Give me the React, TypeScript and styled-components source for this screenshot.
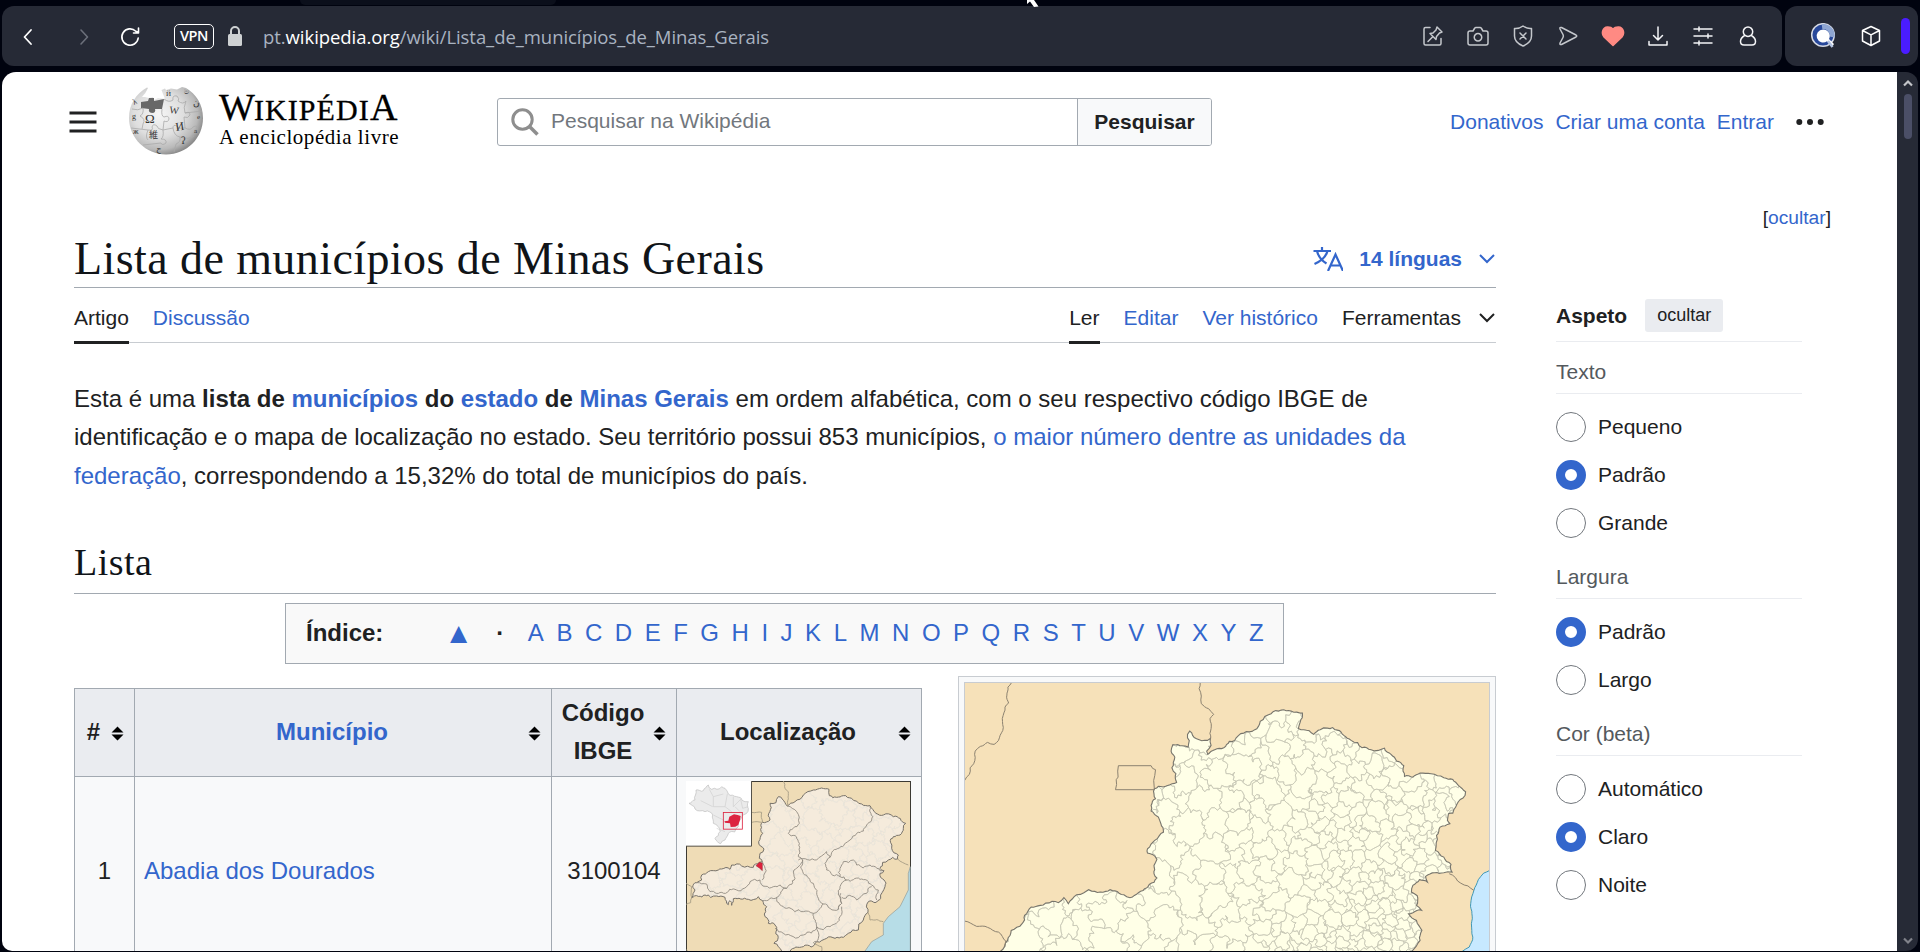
import React from "react";
import styled, { createGlobalStyle, css } from "styled-components";

const sans = '"Liberation Sans", Arial, sans-serif';
const serif = '"Liberation Serif", Georgia, serif';
const ui = '"Open Sans", "Noto Sans", sans-serif';
const blue = "#3366cc";

const Global = createGlobalStyle`
  * { box-sizing: border-box; }
  html, body { margin: 0; padding: 0; background: #00030f; overflow: hidden; }
  svg { display: block; flex: none; }
  a { color: ${blue}; text-decoration: none; }
`;

/* ---------- geometry helpers for the maps ---------- */

type Pt = [number, number];

const parse = (s: string, sx = 1, sy = 1): Pt[] =>
  s.trim().split(/\s+/).map((p) => {
    const [x, y] = p.split(",").map(Number);
    return [x * sx, y * sy] as Pt;
  });

const noise = (a: number, b: number) => {
  const v = Math.sin(a * 12.9898 + b * 78.233) * 43758.5453;
  return v - Math.floor(v) - 0.5;
};

/* Midpoint displacement that gives the same wobble whichever way an edge is walked. */
const bend = (a: Pt, b: Pt, amount: number, min: number): Pt[] => {
  const dx = b[0] - a[0];
  const dy = b[1] - a[1];
  const len = Math.hypot(dx, dy);
  if (len < min) return [b];
  const mx = (a[0] + b[0]) / 2;
  const my = (a[1] + b[1]) / 2;
  const flip = dx > 0 || (dx === 0 && dy > 0) ? 1 : -1;
  const k = noise(Math.round(mx * 50), Math.round(my * 50)) * amount * flip;
  const m: Pt = [mx - dy * k, my + dx * k];
  return [...bend(a, m, amount, min), ...bend(m, b, amount, min)];
};

const wobble = (pts: Pt[], amount: number, min: number): Pt[] => {
  const out: Pt[] = [pts[0]];
  for (let i = 1; i < pts.length; i++) out.push(...bend(pts[i - 1], pts[i], amount, min));
  return out;
};

const path = (pts: Pt[], closed = false) =>
  "M" + pts.map((p) => p[0].toFixed(1) + " " + p[1].toFixed(1)).join("L") + (closed ? "Z" : "");

const cells = (w: number, h: number, spacing: (x: number, y: number) => number, tries: number) => {
  let seed = 7;
  const rnd = () => {
    seed = (seed * 16807) % 2147483647;
    return seed / 2147483647;
  };
  const sites: Pt[] = [];
  for (let i = 0; i < tries; i++) {
    const p: Pt = [rnd() * w, rnd() * h];
    const r = spacing(p[0], p[1]) * (0.65 + rnd() * 0.85);
    if (sites.every((q) => Math.hypot(p[0] - q[0], p[1] - q[1]) > r)) sites.push(p);
  }
  let d = "";
  sites.forEach((s, i) => {
    let poly: Pt[] = [[-20, -20], [w + 20, -20], [w + 20, h + 20], [-20, h + 20]];
    sites.forEach((q, j) => {
      if (i === j || Math.hypot(q[0] - s[0], q[1] - s[1]) > 110) return;
      const nx = q[0] - s[0];
      const ny = q[1] - s[1];
      const c = (q[0] * q[0] + q[1] * q[1] - s[0] * s[0] - s[1] * s[1]) / 2;
      const next: Pt[] = [];
      for (let k = 0; k < poly.length; k++) {
        const a = poly[k];
        const b = poly[(k + 1) % poly.length];
        const da = a[0] * nx + a[1] * ny - c;
        const db = b[0] * nx + b[1] * ny - c;
        if (da <= 0) next.push(a);
        if (da * db < 0) {
          const t = da / (da - db);
          next.push([a[0] + (b[0] - a[0]) * t, a[1] + (b[1] - a[1]) * t]);
        }
      }
      poly = next;
    });
    if (poly.length > 2) d += path(wobble([...poly, poly[0]], 0.95, 4), true);
  });
  return d;
};

/* ---------- state map ---------- */

const MX = 1 / 2.751;
const MY = 1 / 3;
const big = (s: string) => parse(s, MX, MY).map(([x, y]) => [x - 24.7, y - 22.6] as Pt);

const stateOutline = path(
  wobble(
    big(`150,900 165,873 185,840 195,810 225,790 232,765 250,740 275,735 290,728 325,727 340,712 352,730 375,703 395,697
    408,688 425,693 455,693 480,691 505,703 522,712 545,697 558,690 575,672 596,653 588,640 588,615 596,597 585,583 570,578
    570,565 590,540 614,515 607,490 600,470 580,452 580,435 592,415 589,385 600,378 650,366 648,340 637,322 645,290 636,265
    640,253 665,256 682,260 680,222 686,212 705,235 735,240 743,234 745,255 733,272 736,282 755,268 780,262 795,243 810,240
    835,218 850,214 875,198 880,183 910,160 938,149 965,152 996,158 990,185 985,204 1000,208 1027,222 1045,208 1065,203
    1092,209 1110,225 1130,240 1160,262 1185,268 1205,270 1222,263 1240,282 1275,316 1277,348 1300,350 1320,338 1350,340
    1385,352 1410,357 1425,375 1445,394 1438,413 1418,440 1410,458 1398,460 1395,480 1402,490 1375,500 1365,525 1362,570
    1385,590 1405,612 1408,635 1385,637 1360,637 1335,648 1340,665 1318,658 1300,675 1296,695 1312,706 1310,735 1324,750
    1300,757 1288,760 1310,780 1325,810 1320,840 1297,873 1290,900`),
    0.3,
    4
  )
);

const districtBorder = path(big("490,316 580,316 584,324 592,328 590,345 587,360 589,388 482,388 485,372 484,358 489,350 488,332 490,316"));

const neighbours = [
  "196,67 186,80 188,128 178,140 172,210 160,240 148,252 130,246 110,258 96,272 92,310 82,322 80,342 67,360",
  "715,67 712,85 718,130 738,145 752,162 742,175 744,234",
  "67,782 100,798 130,801 160,815 180,842 176,858",
  "1400,640 1468,690",
].map((s) => path(wobble(big(s), 0.2, 4)));

const coast = path(wobble(big("1530,628 1510,631 1495,638 1480,658 1468,690 1459,730 1461,790 1465,830 1455,860 1435,874 1420,900"), 0.15, 5));

const municipalities = cells(
  526,
  275,
  (x, y) => {
    if (x > 385 && y > 190) return 7.6;
    if (x > 300 && y > 235) return 6.8;
    if (x > 370 && y > 140) return 10.5;
    if (x > 330) return 13.5;
    if (x > 270) return 17;
    return 27;
  },
  5200
);

const StateMap = () => (
  <svg width="526" height="290" viewBox="0 0 526 290">
    <defs>
      <clipPath id="state"><path d={stateOutline} /></clipPath>
    </defs>
    <rect width="526" height="290" fill="#f6e1b9" />
    <path d={coast + "L540 290L540 180Z"} fill="#c7e9ff" />
    <path d={coast} fill="none" stroke="#2f8fb0" strokeWidth="0.9" />
    <path d={stateOutline} fill="#ffffe7" />
    <path d={municipalities} clipPath="url(#state)" fill="none" stroke="#c6c6b4" strokeWidth="0.7" />
    <path d={stateOutline} fill="none" stroke="#77756c" strokeWidth="1.1" />
    <path d={districtBorder} fill="none" stroke="#8c8270" strokeWidth="1" />
    {neighbours.map((d) => <path key={d} d={d} fill="none" stroke="#8c8270" strokeWidth="1" />)}
  </svg>
);

/* ---------- small location map ---------- */

const small = (s: string, a = 0.45, m = 10) => wobble(parse(s), a, m);

const regionOutline = path(
  small(`65,713 75,690 68,682 80,668 95,660 95,645 115,635 145,630 155,627 180,628 185,615 215,618 250,622 268,607 277,605
  268,595 270,580 282,567 266,545 278,520 272,508 278,487 300,480 300,430 318,428 325,410 345,428 352,438 375,425 400,405
  430,390 455,384 477,388 478,407 500,412 520,407 545,415 575,432 600,437 618,460 640,465 670,470 707,490 700,505 690,525
  670,530 665,565 685,585 683,597 655,600 638,607 630,625 642,632 630,640 642,660 645,680 632,715 615,728 595,725 594,757
  580,780 565,810 535,820 520,832 470,835 440,845 400,860 360,875 340,890 335,873 312,850 320,810 315,795 295,790 285,770
  290,740 278,722 265,710 235,718 190,716 185,736 180,722 175,734 165,712 140,708 105,705 65,713`),
  true
);

const regionLines = [
  "352,438 380,455 388,490 370,505 355,520 385,545 385,590 398,600 372,630 375,655 350,685",
  "385,600 440,600 470,575 480,592 465,610 470,630 510,650 510,625 520,605 550,600 560,615 600,615 642,632",
  "480,592 540,540 560,520 590,495 605,480 600,440",
  "398,600 400,640 430,670 445,715 460,732 505,748 515,730 505,705 510,680 530,660 510,650",
  "530,660 570,658 605,675 625,690 620,720",
  "515,712 560,720 590,700 605,680",
  "505,748 515,730 512,700",
  "460,732 430,760 400,755 350,745 320,712 350,685 310,680 270,660 240,665 200,690 120,695 110,672 80,668",
  "277,605 277,660",
  "278,722 320,712",
  "430,760 440,800 400,825 340,820 315,805",
  "440,800 480,800 510,770 515,740",
  "440,800 445,835 430,848",
].map((s) => path(small(s)));

const borderLines = [
  "340,363 345,385 355,395 352,438",
  "245,457 275,457 278,487 245,487",
  "683,597 715,615",
  "594,757 600,780 640,785",
  "48,670 65,680 65,713 62,728 48,733",
  "430,848 455,860 455,875",
  "48,868 60,880",
].map((s) => path(small(s, 0.2)));

const brazil = path(
  small("57,430 75,420 78,390 100,392 115,375 125,388 155,380 165,385 175,402 200,410 235,425 235,445 215,470 205,500 175,520 165,540 152,551 135,535 150,515 130,490 128,465 105,455 75,447 57,430", 0.4),
  true
);

const LocationMap = () => (
  <svg width="225" height="178" viewBox="48 363 675 534">
    <defs>
      <clipPath id="region"><path d={regionOutline} /></clipPath>
    </defs>
    <rect x="49.5" y="364.5" width="672" height="540" fill="#efdcb6" stroke="#3c3a34" strokeWidth="3" />
    <path d="M721 620L715 640L715 690L690 740L655 770L640 790L640 825L605 845L585 873L580 900H721Z" fill="#b7dde7" stroke="#8e9a98" strokeWidth="2" />
    <path d={regionOutline} fill="#f5ebdc" />
    <g clipPath="url(#region)">
      <path d={municipalities} transform="translate(48 363) scale(1.9)" fill="none" stroke="#e9e6dc" strokeWidth="0.8" />
    </g>
    <path d={regionOutline} fill="none" stroke="#77726a" strokeWidth="3" />
    {regionLines.map((d) => <path key={d} d={d} fill="none" stroke="#8f897f" strokeWidth="2.6" />)}
    {borderLines.map((d) => <path key={d} d={d} fill="none" stroke="#a39a83" strokeWidth="2.6" />)}
    <path d="M258 617L268 607L277 609V632L268 624Z" fill="#e0203c" stroke="#8a2a34" strokeWidth="1.5" />
    <path d="M48 363H244V558H48Z" fill="#fff" />
    <path d="M244.500 364V558.500H48" fill="none" stroke="#55524a" strokeWidth="3" />
    <path d={brazil} fill="#ebebeb" stroke="#bdbdbd" strokeWidth="2" />
    <path d="M118 388L130 410L160 402M130 410V440L165 440L172 402M190 410V440L212 418M212 418L218 445L235 440M165 440L185 455M130 465L160 480M195 440L210 455M140 505L165 515M92 422L128 440" fill="none" stroke="#cfcfcf" strokeWidth="2" />
    <rect x="160" y="457.500" width="57" height="50" fill="none" stroke="#dc2340" strokeWidth="2.500" />
    <path d="M163 484L175 482L178 470L192 463L203 465L212 468L210 480L205 495L196 500L182 501L180 490L165 488Z" fill="#dc2340" />
  </svg>
);

/* ---------- browser chrome ---------- */

const Window = styled.div`
  width: 1920px;
  height: 952px;
  padding: 6px 2px 1px;
  background: #00030f;
  position: relative;
  overflow: hidden;
  display: flex;
  flex-direction: column;
  gap: 6px;
  font-family: ${sans};
`;
const TabShadow = styled.div`
  position: absolute;
  left: 300px;
  top: -5px;
  width: 256px;
  height: 10px;
  border-radius: 8px;
  background: #0b0f1b;
`;
const Cursor = styled.svg`
  position: absolute;
  left: 1026px;
  top: 0;
`;
const Bars = styled.div`
  display: flex;
  gap: 3px;
  height: 60px;
`;
const Bar = styled.div<{ $w: number }>`
  width: ${(p) => p.$w}px;
  display: flex;
  align-items: center;
  background: #262a36;
  border-radius: 12px;
`;
const Nav = styled.div`
  display: flex;
  align-items: center;
  gap: 32px;
  padding: 2px 0 0 14px;
`;
const Reload = styled.div`
  padding: 2px 0 0 22px;
`;
const Vpn = styled.div`
  width: 40px;
  height: 25px;
  margin: 1px 0 0 32px;
  border: 1.500px solid #fff;
  border-radius: 5px;
  color: #fff;
  font: 600 14.500px/22px ${ui};
  letter-spacing: -0.400px;
  text-align: center;
`;
const Lock = styled.svg`
  margin-left: 13px;
`;
const Url = styled.div`
  flex: 1;
  margin-left: 20px;
  padding-top: 1px;
  font: 18.500px/28px ${ui};
  letter-spacing: -0.060px;
  color: #a9b3c1;
  white-space: nowrap;
  b { font-weight: 400; color: #fff; }
`;
const Actions = styled.div`
  display: flex;
  gap: 21px;
  padding-right: 22px;
`;
const Extensions = styled.div`
  display: flex;
  align-items: center;
  width: 100%;
  padding: 0 8px 0 25px;
  gap: 23px;
`;
const Purple = styled.div`
  width: 9px;
  height: 36px;
  margin-left: -5px;
  border-radius: 5px;
  background: #4a1cff;
`;

const Glyph = ({ d, s = 24, c = "#e6e8ec", w = 1.5, f = "none" }: { d: string; s?: number; c?: string; w?: number; f?: string }) => (
  <svg width={s} height={s} viewBox="0 0 24 24" fill={f} stroke={c} strokeWidth={w} strokeLinecap="round" strokeLinejoin="round">
    <path d={d} />
  </svg>
);

const actionIcons = [
  { d: "M9 3.500H4.500Q3 3.500 3 5V19.500Q3 21 4.500 21H18.500Q20 21 20 19.500V14.500M16 3L21 8L18.500 9L15.500 12.500L15 15.500L9 9.500L12 9L15 6ZM12 12.500L7 17.500", c: "#c4c7cc" },
  { d: "M4 7H7L8.500 4.500Q9 3.500 10 3.500H14Q15 3.500 15.500 4.500L17 7H20Q22 7 22 9V19Q22 21 20 21H4Q2 21 2 19V9Q2 7 4 7ZM12 9.500A3.700 3.700 0 1 0 12 17A3.700 3.700 0 1 0 12 9.500Z", c: "#c4c7cc" },
  { d: "M12 2Q16 5 20.500 4.500V12Q20.500 18.500 12 22Q3.500 18.500 3.500 12V4.500Q8 5 12 2ZM9 9L15 15M15 9L9 15", c: "#c4c7cc" },
  { d: "M5.500 3.500L20 11Q21.500 12 20 13L5.500 20.500Q3.500 21 4 19L7 13.500Q7.800 12 7 10.500L4 5Q3.500 3 5.500 3.500Z", c: "#c4c7cc" },
  { d: "M12 21.500L3 13C0 9.500 1.500 3.200 6.500 2.900C9.500 2.800 11 3.800 12 5C13 3.800 14.500 2.800 17.500 2.900C22.500 3.200 24 9.500 21 13Z", c: "#ff8a83", f: "#ff8a83" },
  { d: "M12 3V16M7.500 11.500L12 16L16.500 11.500M3 17.500V21H21V17.500", c: "#f4f5f7" },
  { d: "M3 5H21M3 12H21M3 19H21M8 3V7M17 10V14M8 17V21", c: "#f4f5f7" },
  { d: "M12 3A4.700 4.700 0 1 0 12 12.400A4.700 4.700 0 1 0 12 3ZM8.500 11.500Q4.500 14 4.500 17.500Q4.500 21 8 21H16Q19.500 21 19.500 17.500Q19.500 14 15.500 11.500", c: "#f4f5f7" },
];

const Viewport = styled.div`
  flex: 1;
  min-height: 0;
  display: flex;
  border-radius: 14px 12px 12px 10px;
  overflow: hidden;
`;
const Page = styled.div`
  width: 1895px;
  background: #fff;
  padding: 0 66px 0 67px;
  color: #202122;
  overflow: hidden;
`;
const Scroll = styled.div`
  width: 21px;
  background: #262a36;
  display: flex;
  flex-direction: column;
  align-items: center;
  padding: 7px 0 6px 1px;
`;
const Thumb = styled.div`
  width: 8px;
  height: 45px;
  margin: 7px 0 auto;
  border-radius: 4px;
  background: #4b4f67;
`;

/* ---------- wiki header ---------- */

const Header = styled.header`
  height: 100px;
  display: flex;
  align-items: center;
`;
const Brand = styled.div`
  display: flex;
  align-items: flex-start;
  width: 369px;
  height: 72px;
  margin-left: 30px;
`;
const BrandText = styled.div`
  margin-left: 15px;
  color: #000;
  font-family: ${serif};
  white-space: nowrap;
`;
const Word = styled.div`
  display: flex;
  align-items: baseline;
  height: 40px;
  margin-top: 1px;
  font-size: 30px;
  line-height: 34px;
  letter-spacing: 1.100px;
  -webkit-text-stroke: 0.300px #000;
  big { font-size: 38px; line-height: 40px; letter-spacing: -1px; }
`;
const Tagline = styled.div`
  font-size: 21px;
  line-height: 24px;
  letter-spacing: 0.550px;
  margin-top: -2px;
`;
const Search = styled.div`
  display: flex;
  width: 715px;
  height: 48px;
  border: 1px solid #a2a9b1;
  border-radius: 3px;
  overflow: hidden;
  font-size: 21px;
`;
const Field = styled.div`
  flex: 1;
  display: flex;
  align-items: center;
  gap: 12px;
  padding-left: 13px;
  color: #72777d;
  span { padding-bottom: 2px; }
`;
const SearchButton = styled.div`
  width: 134px;
  background: #f8f9fa;
  border-left: 1px solid #a2a9b1;
  font-weight: 700;
  line-height: 46px;
  text-align: center;
`;
const Links = styled.nav`
  margin-left: auto;
  display: flex;
  align-items: center;
  gap: 12px;
  font-size: 21px;
  padding-right: 7px;
  svg { margin-left: 10px; }
`;
const Notice = styled.div`
  height: 60px;
  padding-top: 33px;
  text-align: right;
  font-size: 19.200px;
  line-height: 26px;
`;

/* ---------- article ---------- */

const Columns = styled.div`
  display: flex;
  padding-left: 5px;
`;
const Main = styled.main`
  width: 1422px;
`;
const TitleRow = styled.div`
  height: 56px;
  display: flex;
  align-items: center;
  border-bottom: 1px solid #a2a9b1;
`;
const Title = styled.h1`
  margin: 0;
  padding-bottom: 2px;
  flex: 1;
  font: 400 46px/54px ${serif};
  letter-spacing: 0.420px;
  color: #101418;
  white-space: nowrap;
`;
const Langs = styled.div`
  display: flex;
  align-items: center;
  color: ${blue};
  font-size: 21px;
  font-weight: 700;
  gap: 16px;
  padding-bottom: 2px;
`;
const Tabs = styled.div`
  height: 55px;
  display: flex;
  gap: 24px;
  border-bottom: 1px solid #c8ccd1;
  font-size: 21px;
`;
const Tab = styled.div<{ $active?: boolean; $dark?: boolean; $push?: boolean }>`
  height: 56px;
  flex: none;
  display: flex;
  align-items: center;
  gap: 17px;
  padding-top: 6px;
  color: ${(p) => (p.$active || p.$dark ? "#202122" : blue)};
  border-bottom: 3px solid transparent;
  ${(p) => p.$active && css`border-bottom-color: #202122;`}
  ${(p) => p.$push && css`margin-left: auto;`}
`;
const Intro = styled.p`
  margin: 37px 0 0;
  font-size: 24px;
  line-height: 38.400px;
`;
const Section = styled.h2`
  margin: 35px 0 0;
  height: 63.500px;
  padding-top: 9px;
  border-bottom: 1px solid #a2a9b1;
  font: 400 38px/46px ${serif};
  letter-spacing: 0.450px;
  color: #101418;
`;
const Index = styled.div`
  width: 999px;
  height: 61px;
  margin: 9px 0 0 211px;
  padding-left: 20px;
  display: flex;
  align-items: center;
  border: 1px solid #a2a9b1;
  background: #f9f9f9;
  font-size: 24px;
  white-space: nowrap;
`;
const Top = styled.a`
  width: 28px;
  margin: 0 24px 0 61px;
  padding-bottom: 1px;
  font-size: 29px;
  line-height: 30px;
  text-align: center;
`;
const Dot = styled.b`
  width: 31.500px;
`;
const Letters = styled.div`
  display: flex;
  gap: 12.520px;
`;
const Split = styled.div`
  display: flex;
  align-items: flex-start;
  justify-content: space-between;
`;
const Table = styled.div`
  margin-top: 24px;
  width: 848px;
  display: grid;
  grid-template-columns: 60px 417px 125px 245px;
  grid-template-rows: 88px 188px;
  border-left: 1px solid #a2a9b1;
  border-top: 1px solid #a2a9b1;
  font-size: 24px;
  line-height: 38.400px;
`;
const Cell = styled.div<{ $head?: boolean; $align?: string; $image?: boolean }>`
  position: relative;
  display: flex;
  align-items: center;
  justify-content: ${(p) => p.$align || "center"};
  padding: ${(p) => (p.$head ? "0 22px 0 0" : p.$image ? "0 2px 0 0" : "2px 9px 0")};
  text-align: center;
  border-right: 1px solid #a2a9b1;
  border-bottom: 1px solid #a2a9b1;
  background: ${(p) => (p.$head ? "#eaecf0" : "#f8f9fa")};
  font-weight: ${(p) => (p.$head ? 700 : 400)};
`;
const Sort = styled.svg`
  position: absolute;
  right: 10px;
  top: 37px;
`;
const Frame = styled.div`
  margin-top: 12px;
  width: 538px;
  padding: 5px;
  border: 1px solid #c8ccd1;
  background: #f8f9fa;
`;
const FrameInner = styled.div`
  border: 1px solid #c8ccd1;
  overflow: hidden;
`;

/* ---------- appearance panel ---------- */

const Aside = styled.aside`
  width: 246px;
  margin: 60px 0 0 60px;
  font-size: 21px;
`;
const AsideHead = styled.div`
  height: 50px;
  display: flex;
  align-items: flex-start;
  gap: 18px;
  padding-top: 7px;
  border-bottom: 1px solid #eaecf0;
  font-weight: 700;
  line-height: 33px;
`;
const Hide = styled.div`
  width: 78px;
  height: 33px;
  background: #eaecf0;
  border-radius: 3px;
  font: 18px/32px ${sans};
  text-align: center;
`;
const GroupTitle = styled.div`
  height: 52px;
  padding-top: 14px;
  line-height: 32px;
  color: #54595d;
  border-bottom: 1px solid #eaecf0;
  margin-bottom: 9px;
`;
const Option = styled.label`
  height: 48px;
  display: flex;
  align-items: center;
  gap: 12px;
`;
const Radio = styled.i<{ $on: boolean }>`
  width: 30px;
  height: 30px;
  border-radius: 50%;
  border: ${(p) => (p.$on ? "9px solid " + blue : "1px solid #72777d")};
  background: #fff;
`;

const SortIcon = () => (
  <Sort width="13" height="15" viewBox="0 0 13 15">
    <path d="M6.500 0.500L12.500 6.500H0.500ZM0.500 8.500H12.500L6.500 14.500Z" fill="#000" />
  </Sort>
);

const Chevron = ({ c }: { c: string }) => (
  <svg width="18" height="12" viewBox="0 0 18 12" fill="none" stroke={c} strokeWidth="2">
    <path d="M2 2L9 9L16 2" />
  </svg>
);

const Globe = () => (
  <svg width="76" height="70" viewBox="0 0 76 70">
    <defs>
      <radialGradient id="ball" cx="0.4" cy="0.4" r="0.62">
        <stop offset="0" stopColor="#f6f6f6" />
        <stop offset="0.55" stopColor="#dedede" />
        <stop offset="0.85" stopColor="#b9b9b9" />
        <stop offset="1" stopColor="#8c8c8c" />
      </radialGradient>
    </defs>
    <path d="M19 1.500C8 8 1 18 1 32C1 52 18 68.500 38 68.500C59 68.500 75 52 75 32C75 18 68 8 58 2L54 1L49 3.500L43 2.500L38 4L37 2.500L33.500 4L35 8L37 13L30 12L26 14L25 11L21 12L17 11L14 11Q18 7 20 2Z" fill="url(#ball)" />
    <path d="M13 16L20 15L21 12L26 12L26 15L36 13L34 23L27 23Q28 26 25 27Q20 27 21 23L13 22Z" fill="#686868" />
    <g fill="none" stroke="#aaa" strokeWidth="0.8">
      <path d="M4 23Q10 25 15 22M34 23Q33 30 36 31Q41 29 41 33Q40 37 36 35L35 44Q29 43 29 40Q25 37 24 41Q26 45 20 44L3 42M36 13Q41 17 45 14Q44 9 49 10Q52 13 50 15Q55 19 58 15M58 15Q55 22 57 27Q62 25 62 29Q60 33 56 31L57 42Q50 43 49 40Q45 38 45 42L35 44M57 27L74 25M57 42Q63 45 65 41Q70 38 69 44M35 44Q36 51 33 53Q39 53 38 57Q34 60 33 57L15 59M20 44Q17 51 20 54M45 42Q46 50 52 51Q53 56 48 58L46 66M52 51Q61 54 66 50M15 22Q16 28 12 30Q18 33 15 38L14 43" />
    </g>
    <g fill="#333" fontFamily="Liberation Serif, serif">
      <text x="17" y="37" fontSize="13">Ω</text>
      <text x="41" y="27" fontSize="10" transform="rotate(8 41 27)">W</text>
      <text x="48" y="45" fontSize="12" transform="rotate(-8 48 45)">И</text>
      <text x="21" y="52" fontSize="9" fontFamily="Noto Sans CJK JP, sans-serif">維</text>
      <text x="53" y="58" fontSize="10">ʔ</text>
      <text x="65" y="20" fontSize="9">ن</text>
      <text x="38" y="10" fontSize="7">Й</text>
      <text x="56" y="8" fontSize="7">ම</text>
      <text x="28" y="65" fontSize="8" transform="rotate(12 28 65)">ح</text>
      <text x="4" y="33" fontSize="8">g</text>
      <text x="5" y="48" fontSize="8">ж</text>
      <text x="6" y="19" fontSize="8" transform="rotate(-25 6 19)">λ</text>
      <text x="69" y="33" fontSize="7">e</text>
      <text x="66" y="47" fontSize="7">a</text>
    </g>
  </svg>
);

const groups = [
  { title: "Texto", options: ["Pequeno", "Padrão", "Grande"], on: "Padrão" },
  { title: "Largura", options: ["Padrão", "Largo"], on: "Padrão" },
  { title: "Cor (beta)", options: ["Automático", "Claro", "Noite"], on: "Claro" },
];

export default function App() {
  return (
    <Window>
      <Global />
      <TabShadow />
      <Bars>
        <Bar $w={1780}>
          <Nav>
            <Glyph d="M15 5L8.500 12L15 19" s={24} c="#fff" w={1.8} />
            <Glyph d="M9 5L15.500 12L9 19" s={24} c="#6b6f7a" w={1.6} />
          </Nav>
          <Reload>
            <Glyph d="M20.200 13A8.200 8.200 0 1 1 17.800 6.200L20 7.500M20.500 3V8H15.500" s={24} c="#fff" w={1.6} />
          </Reload>
          <Vpn>VPN</Vpn>
          <Lock width="16" height="22" viewBox="0 0 16 22">
            <path d="M4 10V6A4 4 0 0 1 12 6V10" fill="none" stroke="#ced1d3" strokeWidth="2" />
            <rect x="1" y="9" width="14" height="12" rx="1.500" fill="#ced1d3" />
          </Lock>
          <Url>pt.<b>wikipedia.org</b>/wiki/Lista_de_municípios_de_Minas_Gerais</Url>
          <Actions>
            {actionIcons.map((i) => <Glyph key={i.d} d={i.d} c={i.c} f={i.f} />)}
          </Actions>
        </Bar>
        <Bar $w={133}>
          <Extensions>
            <svg width="26" height="26" viewBox="0 0 26 26">
              <circle cx="13" cy="12" r="11.300" fill="#28489a" stroke="#d6dae4" strokeWidth="1.500" />
              <path d="M12 3.500A9 9 0 0 1 22 14" fill="none" stroke="#8fa6d2" strokeWidth="5" />
              <path d="M13 6.500A6.500 6.500 0 1 0 17 18.200L22 24L24 21L19 16A6.500 6.500 0 0 0 13 6.500Z" fill="#fff" />
              <path d="M18 18L22.500 24" stroke="#b5c4e2" strokeWidth="2.500" />
            </svg>
            <Glyph d="M12 2.500L20.500 6.500V17L12 21.500L3.500 17V6.500ZM3.500 6.500L12 10.800L20.500 6.500M12 10.800V21.500" c="#fff" />
            <Purple />
          </Extensions>
        </Bar>
      </Bars>
      <Viewport>
        <Page>
          <Header>
            <svg width="29" height="24" viewBox="0 0 29 24">
              <path d="M0.500 3H27.500M0.500 12H27.500M0.500 21H27.500" stroke="#202122" strokeWidth="2.800" />
            </svg>
            <Brand>
              <Globe />
              <BrandText>
                <Word><big>W</big>IKIPÉDI<big>A</big></Word>
                <Tagline>A enciclopédia livre</Tagline>
              </BrandText>
            </Brand>
            <Search>
              <Field>
                <svg width="28" height="28" viewBox="0 0 28 28" fill="none" stroke="#8e8e8e" strokeWidth="3">
                  <circle cx="11.500" cy="11.500" r="9.700" />
                  <path d="M18.500 18.500L26.500 26.500" strokeWidth="3.600" />
                </svg>
                <span>Pesquisar na Wikipédia</span>
              </Field>
              <SearchButton>Pesquisar</SearchButton>
            </Search>
            <Links>
              <a>Donativos</a>
              <a>Criar uma conta</a>
              <a>Entrar</a>
              <svg width="28" height="8" viewBox="0 0 28 8" fill="#202122">
                <circle cx="3.300" cy="4" r="3" /><circle cx="14" cy="4" r="3" /><circle cx="24.700" cy="4" r="3" />
              </svg>
            </Links>
          </Header>
          <Notice>[<a>ocultar</a>]</Notice>
          <Columns>
            <Main>
              <TitleRow>
                <Title>Lista de municípios de Minas Gerais</Title>
                <Langs>
                  <svg width="30" height="24" viewBox="0 0 30 24" fill="none" stroke={blue} strokeWidth="2.200">
                    <path d="M0.500 4H18M9 0V4M14.500 4Q12.500 12 1.500 17M4 4Q6 12 13.500 16.500" />
                    <path d="M15 24L22.500 7.500L30 24M17.500 18.500H27.500" />
                  </svg>
                  <span>14 línguas</span>
                  <Chevron c={blue} />
                </Langs>
              </TitleRow>
              <Tabs>
                <Tab $active>Artigo</Tab>
                <Tab>Discussão</Tab>
                <Tab $active $push>Ler</Tab>
                <Tab>Editar</Tab>
                <Tab>Ver histórico</Tab>
                <Tab $dark>Ferramentas<Chevron c="#202122" /></Tab>
              </Tabs>
              <Intro>
                Esta é uma <b>lista de <a>municípios</a> do <a>estado</a> de <a>Minas Gerais</a></b> em ordem alfabética, com o seu
                respectivo código IBGE de<br />identificação e o mapa de localização no estado. Seu território possui 853 municípios,{" "}
                <a>o maior número dentre as unidades da<br />federação</a>, correspondendo a 15,32% do total de municípios do país.
              </Intro>
              <Section>Lista</Section>
              <Index>
                <b>Índice:</b>
                <Top>▲</Top>
                <Dot>·</Dot>
                <Letters>{"ABCDEFGHIJKLMNOPQRSTUVWXYZ".split("").map((l) => <a key={l}>{l}</a>)}</Letters>
              </Index>
              <Split>
                <Table>
                  <Cell $head>#<SortIcon /></Cell>
                  <Cell $head><a>Município</a><SortIcon /></Cell>
                  <Cell $head>Código<br />IBGE<SortIcon /></Cell>
                  <Cell $head>Localização<SortIcon /></Cell>
                  <Cell>1</Cell>
                  <Cell $align="flex-start"><a>Abadia dos Dourados</a></Cell>
                  <Cell>3100104</Cell>
                  <Cell $image><LocationMap /></Cell>
                </Table>
                <Frame><FrameInner><StateMap /></FrameInner></Frame>
              </Split>
            </Main>
            <Aside>
              <AsideHead>Aspeto<Hide>ocultar</Hide></AsideHead>
              {groups.map((g) => (
                <div key={g.title}>
                  <GroupTitle>{g.title}</GroupTitle>
                  {g.options.map((o) => (
                    <Option key={o}><Radio $on={o === g.on} />{o}</Option>
                  ))}
                </div>
              ))}
            </Aside>
          </Columns>
        </Page>
        <Scroll>
          <svg width="10" height="8" viewBox="0 0 10 8" fill="none" stroke="#c3c5c9" strokeWidth="2.200"><path d="M1 6.500L5 2.500L9 6.500" /></svg>
          <Thumb />
          <svg width="10" height="8" viewBox="0 0 10 8" fill="none" stroke="#80828a" strokeWidth="2.200"><path d="M1 1.500L5 5.500L9 1.500" /></svg>
        </Scroll>
      </Viewport>
      <Cursor width="14" height="8" viewBox="0 0 14 8"><path d="M1 0V4L4 1.500L8 7L12.500 6.500L8 0Z" fill="#fff" /></Cursor>
    </Window>
  );
}
